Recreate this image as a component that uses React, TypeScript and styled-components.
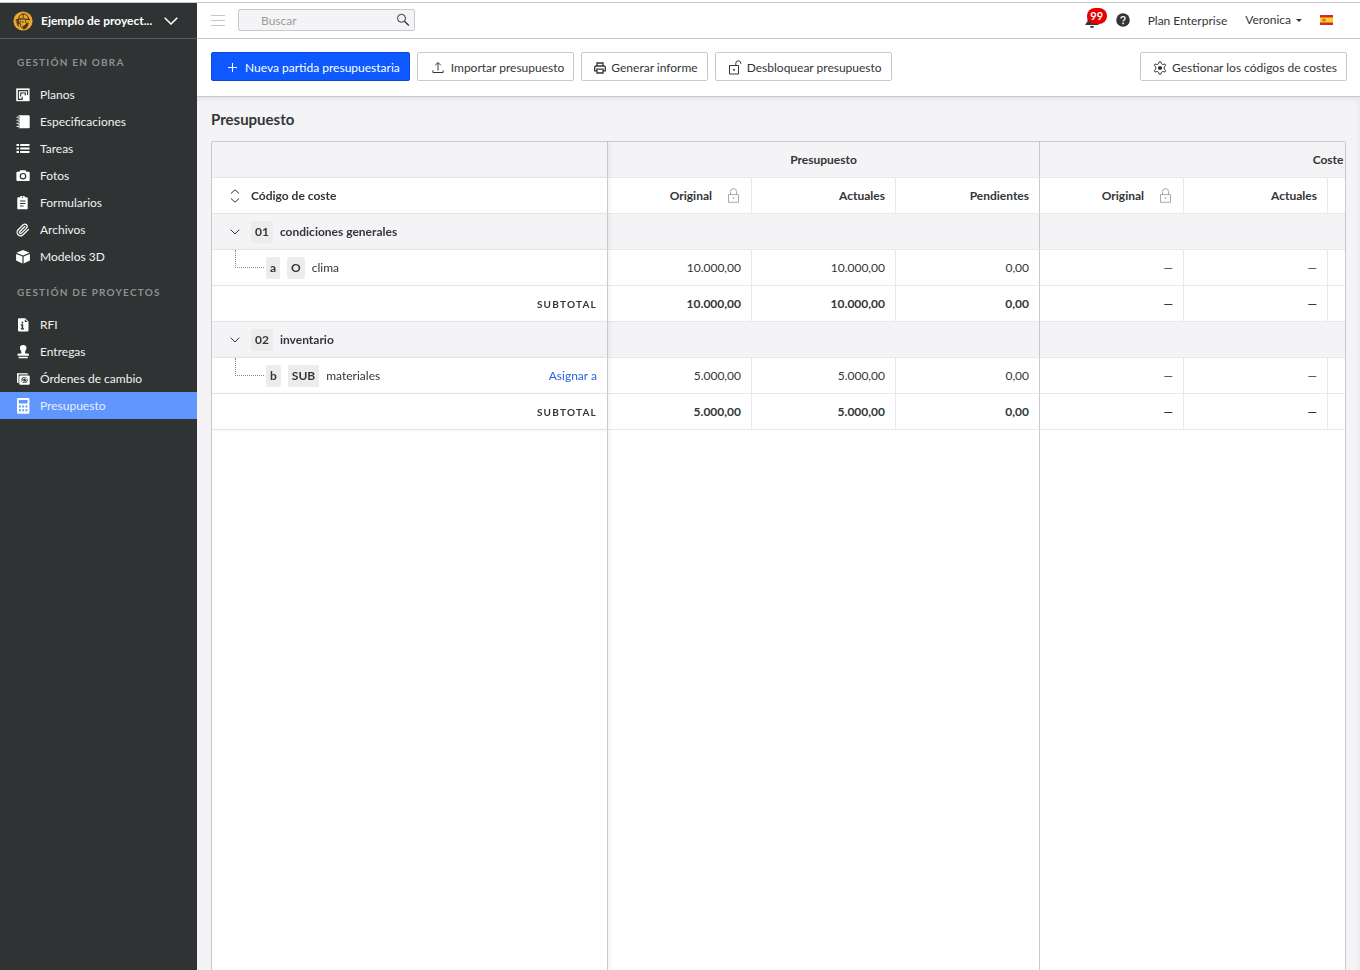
import React from "react";
import styled, { createGlobalStyle, css } from "styled-components";

const color = {
  text: "#333638",
  sidebar: "#2f3333",
  line: "#c9c9cb",
  hairline: "#e9e9ea",
  panel: "#f4f4f6",
  blue: "#0d59ff",
  active: "#6196ff",
};

const GlobalStyle = createGlobalStyle`
  *, *::before, *::after { box-sizing: border-box; }
  body {
    margin: 0;
    background: #fff;
    color: ${color.text};
    font-family: Lato, "Liberation Sans", sans-serif;
    font-size: 12px;
    line-height: 16px;
  }
  button, input { font: inherit; color: inherit; margin: 0; }
  button { cursor: pointer; }
  svg { display: block; flex: none; }
`;

const Page = styled.div`
  display: flex;
  flex-direction: column;
  height: 100vh;
  overflow: hidden;
`;

const TopStrip = styled.div`
  flex: none;
  height: 3px;
  border-bottom: 1px solid ${color.line};
`;

const Body = styled.div`
  flex: 1;
  min-height: 0;
  display: flex;
`;

/* Sidebar */

const Sidebar = styled.aside`
  flex: none;
  width: 197px;
  background: ${color.sidebar};
  color: #f2f2f2;
`;

const ProjectSwitcher = styled.button`
  display: flex;
  align-items: center;
  width: 100%;
  height: 36px;
  padding: 0 19px 0 13px;
  gap: 8px;
  border: 0;
  border-bottom: 1px solid #595c5c;
  background: none;
  color: #fff;
  font-weight: 700;
  text-align: left;
`;

const ProjectName = styled.span`
  flex: 1;
  white-space: nowrap;
`;

const Nav = styled.nav`
  padding-top: 1px;
`;

const NavHeading = styled.h2`
  margin: 0;
  padding: 14px 17px 11px;
  font-size: 10px;
  line-height: 16px;
  font-weight: 700;
  letter-spacing: 0.12em;
  text-transform: uppercase;
  color: #8e9191;
`;

const NavList = styled.ul`
  margin: 0;
  padding: 0;
  list-style: none;
`;

const NavLink = styled.a<{ $active?: boolean }>`
  display: flex;
  align-items: center;
  gap: 10px;
  height: 27px;
  padding: 0 16px;
  text-decoration: none;
  color: ${(p) => (p.$active ? "#e6eeff" : "#f2f2f2")};
  background: ${(p) => (p.$active ? color.active : "none")};
  svg { color: #fff; }
`;

/* Header */

const Main = styled.div`
  flex: 1;
  min-width: 0;
  display: flex;
  flex-direction: column;
`;

const Header = styled.header`
  flex: none;
  display: flex;
  align-items: center;
  height: 36px;
  padding: 0 27px 1px 14px;
  border-bottom: 1px solid ${color.line};
`;

const PlainButton = styled.button`
  display: flex;
  align-items: center;
  gap: 5px;
  padding: 0;
  border: 0;
  background: none;
`;

const SearchBox = styled.form`
  display: flex;
  align-items: center;
  width: 177px;
  height: 22px;
  margin-left: 13px;
  padding: 0 4px 0 22px;
  border: 1px solid ${color.line};
  border-radius: 2px;
  background: ${color.panel};
`;

const SearchInput = styled.input`
  flex: 1;
  min-width: 0;
  padding: 1px 0 0;
  border: 0;
  outline: 0;
  background: none;
  &::placeholder { color: #9b9b9b; opacity: 1; }
`;

const HeaderTools = styled.div`
  display: flex;
  align-items: center;
  gap: 18px;
  margin-left: auto;
`;

const IconGroup = styled.div`
  display: flex;
  align-items: center;
  gap: 17px;
`;

const Bell = styled(PlainButton)`
  position: relative;
`;

const Badge = styled.span`
  position: absolute;
  left: 2px;
  top: -4px;
  width: 20px;
  height: 16px;
  border-radius: 8px;
  background: #e60000;
  color: #fff;
  font-size: 11px;
  font-weight: 700;
  line-height: 15px;
  text-align: center;
`;

const PlanLink = styled.a`
  padding-top: 2px;
  color: inherit;
  text-decoration: none;
`;

/* Toolbar */

const Toolbar = styled.div`
  flex: none;
  display: flex;
  align-items: center;
  gap: 7px;
  height: 58px;
  padding: 0 13px 2px 14px;
  border-bottom: 1px solid ${color.line};
`;

const ToolButton = styled.button<{ $primary?: boolean; $lead?: number; $gap?: number }>`
  display: flex;
  align-items: center;
  gap: ${(p) => p.$gap ?? 5}px;
  height: 29px;
  padding: 2px 9px 0 ${(p) => p.$lead ?? 12}px;
  border: 1px solid ${color.line};
  border-radius: 2px;
  background: #fff;
  white-space: nowrap;
  ${(p) =>
    p.$primary &&
    css`
      border-color: #0b49d6;
      background: ${color.blue};
      color: #fff;
    `}
`;

const Spacer = styled.div`
  flex: 1;
`;

/* Budget */

const Content = styled.main`
  flex: 1;
  min-height: 0;
  display: flex;
  flex-direction: column;
  padding: 12px 14px 0;
  background: ${color.panel};
  box-shadow: inset -2px 4px 5px -1px rgba(0, 0, 0, 0.06);
`;

const Title = styled.h1`
  flex: none;
  margin: 0 0 12px;
  font-size: 15px;
  line-height: 20px;
  font-weight: 700;
`;

const TableFrame = styled.div`
  flex: 1;
  min-height: 0;
  overflow: hidden;
  border: 1px solid ${color.line};
  border-bottom: 0;
  border-radius: 2px 2px 0 0;
  background: #fff;
`;

const Table = styled.table`
  width: 1404px;
  height: 100%;
  table-layout: fixed;
  border-collapse: separate;
  border-spacing: 0;
  th, td { padding: 0; }
`;

const CodeCol = styled.col`
  width: 396px;
`;

const AmountCol = styled.col`
  width: 144px;
`;

type Edge = "none" | "light" | "strong";

const cell = css<{ $shade?: boolean; $edge?: Edge; $bold?: boolean }>`
  height: 36px;
  border-bottom: 1px solid ${color.hairline};
  border-right: ${(p) =>
    p.$edge === "none"
      ? "0"
      : `1px solid ${p.$edge === "strong" ? color.line : color.hairline}`};
  background: ${(p) => (p.$shade ? color.panel : "#fff")};
  font-weight: ${(p) => (p.$bold ? 700 : 400)};
  text-align: right;
  white-space: nowrap;
`;

const HeadCell = styled.th`
  ${cell}
`;

const DataCell = styled.td`
  ${cell}
  && { padding-right: 10px; }
`;

const pinned = css`
  position: sticky;
  left: 0;
  z-index: 1;
  box-shadow: 2px 0 5px rgba(0, 0, 0, 0.05);
`;

const PinnedHead = styled(HeadCell)`
  ${pinned}
`;

const PinnedCell = styled(DataCell)`
  ${pinned}
`;

const GroupTitle = styled(HeadCell)`
  text-align: center;
`;

const FillerCell = styled.td<{ $pinned?: boolean }>`
  border-right: 1px solid ${color.line};
  ${(p) => p.$pinned && pinned}
`;

const CellRow = styled.div<{ $indent: number; $gap?: number }>`
  display: flex;
  align-items: center;
  gap: ${(p) => p.$gap ?? 7}px;
  height: 35px;
  padding-left: ${(p) => p.$indent}px;
`;

const HeadContent = styled.div`
  display: flex;
  align-items: center;
  justify-content: flex-end;
  gap: 15px;
  padding-right: 10px;
`;

const ToggleButton = styled(PlainButton)`
  margin-right: 4px;
`;

const CodeTag = styled.span`
  height: 22px;
  padding: 0 4px;
  border-radius: 2px;
  background: #ececec;
  line-height: 22px;
  font-weight: 700;
`;

const Branch = styled.span`
  align-self: flex-start;
  width: 29px;
  height: 18px;
  margin-right: -5px;
  border-left: 1px dotted #8a8a8a;
  border-bottom: 1px dotted #8a8a8a;
`;

const AssignLink = styled.a`
  margin-left: auto;
  color: #2a63dc;
  text-decoration: none;
`;

const Subtotal = styled.span`
  font-size: 10px;
  letter-spacing: 0.12em;
`;

/* Icons */

type IconProps = { w?: number; h?: number; box: string; children: React.ReactNode };

const Solid = ({ w = 14, h = 14, box, children }: IconProps) => (
  <svg width={w} height={h} viewBox={box} fill="currentColor" aria-hidden="true">
    {children}
  </svg>
);

const Line = ({ w = 14, h = 14, box, children }: IconProps) => (
  <svg width={w} height={h} viewBox={box} fill="none" stroke="currentColor" aria-hidden="true">
    {children}
  </svg>
);

const Chevron = ({ w, h, stroke = 1 }: { w: number; h: number; stroke?: number }) => (
  <Line w={w} h={h} box={`0 0 ${w} ${h}`}>
    <path d={`M.7 .7 ${w / 2} ${h - 1} ${w - 0.7} .7`} strokeWidth={stroke} />
  </Line>
);

const LogoIcon = () => (
  <svg width="20" height="20" viewBox="0 0 20 20" aria-hidden="true">
    <circle cx="10" cy="10" r="9.6" fill="#eaa831" />
    <path d="M3.400 9.600 6 9.300v3l-.4 3.800C4.200 14.800 3.300 12.500 3.400 9.600z" fill="#5b3e10" />
    <path
      d="M9.500 14.800c1.500.3 2.500-.6 3-1.800l1.500-1.200 1.600-.6c.1 2.500-.9 4.900-2.700 6.200-.9.700-2 1-3 .8z"
      fill="#4e360f"
    />
    <g fill="none" stroke="#47300c" strokeLinecap="round">
      <path d="M5.600 7.800C6 4.600 8 2.900 10.600 2.900s4.700 1.900 5.100 5" strokeWidth="1" />
      <path d="M3.200 9.100c3.400-1.300 8.500-1.400 13.300-.4" strokeWidth="1.200" />
      <path d="M10.200 3.200v3.500M7.300 9.800l-.7 2.900h1v2.800l1.600 1.500" strokeWidth=".9" />
      <path d="M9 11h1.300M12.600 9.500v2" strokeWidth=".9" />
    </g>
  </svg>
);

const PlansIcon = () => (
  <Solid box="0 0 14 14">
    <path d="M.2.4h13.400v12.800H.2z" />
    <path
      d="M11.600 7V2.600H2.400v8.800h3.800V8.800M4.700 8.600V5h4.600v2.600"
      fill="none"
      stroke="#2f3333"
      strokeWidth="1.100"
    />
  </Solid>
);

const SpecsIcon = () => (
  <Solid box="0 0 14 14">
    <path d="M2.500.3H12.600a1.100 1.100 0 0 1 1.100 1.100v10.800a1.100 1.100 0 0 1-1.100 1.100H2.500z" />
    <path
      d="M.7 2.200h3M.7 5.200h3M.7 8.300h3M.7 11.400h3"
      stroke="#2f3333"
      strokeWidth="2"
    />
    <path d="M.5 2.200h3M.5 5.200h3M.5 8.300h3M.5 11.400h3" stroke="currentColor" strokeWidth="1" />
  </Solid>
);

const TasksIcon = () => (
  <Solid box="0 0 14 14">
    <path d="M.5 2h2.500v2H.5zM4.200 2H13.500v2H4.200zM.5 5.500h2.500v2H.5zM4.200 5.500h9.300v2H4.200zM.5 9h2.500v2H.5zM4.200 9h9.300v2H4.200z" />
  </Solid>
);

const CameraIcon = () => (
  <Solid box="0 0 14 14">
    <path
      fillRule="evenodd"
      d="M4.300 1.300h5.200l1 1.400h2.200a1 1 0 0 1 1 1v7.300a1 1 0 0 1-1 1H1.400a1 1 0 0 1-1-1V3.700a1 1 0 0 1 1-1h1.900zM7 3.900a3.300 3.300 0 1 0 0 6.600A3.300 3.300 0 0 0 7 3.900zm0 1.200a2.100 2.100 0 1 1 0 4.200 2.100 2.100 0 0 1 0-4.200z"
    />
  </Solid>
);

const FormsIcon = () => (
  <Solid box="0 0 14 14">
    <path
      fillRule="evenodd"
      d="M4.200 1.200A2.200 2 0 0 1 8.800 1.200h2a.9.9 0 0 1 .9.9v10.300a.9.9 0 0 1-.9.900H2.200a.9.9 0 0 1-.9-.9V2.100a.9.9 0 0 1 .9-.9zM6.500.6a.7.700 0 1 0 0 1.400.7.700 0 0 0 0-1.400zM4 4.500v1h5.400v-1zM4 7v1h5.400V7zM4 9.500v1h3.600v-1z"
    />
  </Solid>
);

const ClipIcon = () => (
  <Line box="0 0 24 24">
    <path
      d="m21.400 11-9.200 9.200a6 6 0 0 1-8.500-8.500l8.600-8.600a4 4 0 0 1 5.700 5.700l-8.600 8.600a2 2 0 0 1-2.800-2.900l8.500-8.400"
      strokeWidth="2.200"
      strokeLinecap="round"
    />
  </Line>
);

const CubeIcon = () => (
  <Solid box="0 0 14 14">
    <path d="M7 0l6.600 2.700L7 5.500.4 2.700zM.1 3.900l6.300 2.700v6.900L.1 10.600zM13.900 3.900L7.600 6.600v6.900l6.300-2.900z" />
  </Solid>
);

const RfiIcon = () => (
  <Solid box="0 0 14 14">
    <path
      fillRule="evenodd"
      d="M3 .3h6.200l3.300 3.200v9a1 1 0 0 1-1 1H3a1 1 0 0 1-1-1V1.300a1 1 0 0 1 1-1zM8.800 1.300v2.700h2.800zM5.600 3.800v1.600h1.600V3.800zM4.800 6.200v1.200h.8v2.800h-.8v1.200h3.200v-1.200h-.8V6.200z"
    />
  </Solid>
);

const StampIcon = () => (
  <Solid box="0 0 14 14">
    <path d="M7.200 0a3.300 3.300 0 0 1 3.300 3.300c0 1.700-1.500 2.300-1.500 4.200 0 .7.400 1 1.100 1h1.600a1.200 1.200 0 0 1 1.200 1.200v1H1.500v-1a1.200 1.200 0 0 1 1.200-1.200h1.600c.7 0 1.100-.3 1.100-1 0-1.900-1.500-2.500-1.500-4.200A3.300 3.300 0 0 1 7.200 0zM2.600 11.800h9.200v1.400H2.600z" />
  </Solid>
);

const ChangeIcon = () => (
  <Solid box="0 0 14 14">
    <path d="M1 1.200h10.800v1.400H2.600v8.400H1.800L1 10.200z" />
    <path
      fillRule="evenodd"
      d="M4.300 3.400h8.400a1 1 0 0 1 1 1v7.300a1 1 0 0 1-1 1H4.300a1 1 0 0 1-1-1V4.400a1 1 0 0 1 1-1zm4.200 1.500a3.100 3.100 0 1 0 0 6.200 3.100 3.100 0 0 0 0-6.200z"
    />
    <path
      d="M6.600 7.800A2 2 0 0 1 10.200 6.800M10.500 8.200A2 2 0 0 1 6.900 9.300M10.600 5.700v1.500H9.200M6.400 10.300V8.900H7.800"
      fill="none"
      stroke="currentColor"
      strokeWidth=".9"
    />
  </Solid>
);

const CalculatorIcon = () => (
  <Solid h={16} box="0 0 14 16">
    <path
      fillRule="evenodd"
      d="M2.200 0h10a1.200 1.200 0 0 1 1.200 1.200v13.400a1.200 1.200 0 0 1-1.200 1.200h-10A1.200 1.200 0 0 1 1 14.600V1.200A1.200 1.200 0 0 1 2.200 0zM2.800 2v3.600h8.800V2zM3 7.500v2h1.900v-2zM6.200 7.500v2h1.900v-2zM9.500 7.500v2h1.900v-2zM3 11.300v2h1.900v-2zM6.200 11.300v2h1.900v-2zM9.500 11.300v2h1.900v-2z"
    />
  </Solid>
);

const MenuIcon = () => (
  <Line box="0 0 14 11" h={11}>
    <path d="M0 .5h14M0 5.500h14M0 10.500h14" stroke="#c4c4c4" />
  </Line>
);

const SearchIcon = () => (
  <Line box="0 0 14 14">
    <circle cx="5.500" cy="5.300" r="4" />
    <path d="M8.500 8.300 12.800 12.500" strokeWidth="1.400" />
  </Line>
);

const BellIcon = () => (
  <Solid box="0 0 14 16" h={16}>
    <path d="M7 .5c3 0 4.500 2.300 4.500 5v4l2 2.500v1H.5v-1l2-2.500v-4c0-2.700 1.500-5 4.500-5zM5 14h4a2 2 0 0 1-4 0z" />
  </Solid>
);

const HelpIcon = () => (
  <Solid box="0 0 14 14">
    <circle cx="7" cy="7" r="6.800" />
    <path
      d="M4.900 5.600C4.900 4.300 5.800 3.600 7 3.600s2.100.7 2.100 1.800C9.100 6.900 7.100 6.900 7.100 8.500"
      fill="none"
      stroke="#fff"
      strokeWidth="1.300"
    />
    <circle cx="7.100" cy="10.400" r=".9" fill="#fff" />
  </Solid>
);

const CaretIcon = () => (
  <Solid w={6} h={3} box="0 0 6 3">
    <path d="M0 0h6L3 3z" />
  </Solid>
);

const FlagIcon = () => (
  <svg width="13" height="10" viewBox="0 0 13 10" aria-hidden="true">
    <path d="M0 0h13v10H0z" fill="#d32a32" />
    <path d="M0 2.500h13v5H0z" fill="#ffd21c" />
    <path d="M2.500 3.600h1v2.800h-1zM4 4h1.500v2.200H4z" fill="#b5562a" />
  </svg>
);

const PlusIcon = () => (
  <Line box="0 0 12 12" w={12} h={12}>
    <path d="M6.500 1v9M2 5.500h9" />
  </Line>
);

const UploadIcon = () => (
  <Line box="0 0 12 12" w={12} h={12}>
    <path d="M6 8.500V.8M3.200 3.300 6 .5l2.800 2.800M.9 8.300v2.200h10.200V8.300" />
  </Line>
);

const PrinterIcon = () => (
  <Line box="0 0 12 12" w={12} h={12}>
    <path
      d="M3 4V1h6v3M2.800 8.800H.7V5.200A1.200 1.200 0 0 1 1.900 4h8.200a1.200 1.200 0 0 1 1.200 1.200v3.600H9.200M3 7.200h6V11H3z"
      strokeWidth="1.300"
    />
  </Line>
);

const UnlockIcon = () => (
  <Line box="0 0 14 15" h={15}>
    <path d="M1.500 5.500h9v8.500h-9zM7.800 5.500V3.300a2.500 2.500 0 0 1 5 0V4" />
    <circle cx="6" cy="9.800" r=".6" fill="currentColor" />
  </Line>
);

const GearIcon = () => (
  <Line box="0 0 14 14">
    <path
      d="M6.200.8h1.600l.7 2 1.200.7 2.200-.5.8 1.400L11.200 6v1.900l1.500 1.700-.8 1.400-2.200-.5-1.200.7-.7 2H6.200l-.7-2-1.200-.7-2.200.5-.8-1.400 1.500-1.700V6L1.300 4.400 2.100 3l2.200.5 1.200-.7z"
    />
    <circle cx="7" cy="7" r="2.100" fill="currentColor" stroke="none" />
  </Line>
);

const LockIcon = () => (
  <Line box="0 0 14 15" h={15}>
    <g stroke="#aaa">
      <path d="M1.500 6.500h10v7.800h-10zM3.500 6.500V3.600a3 3 0 0 1 6 0v2.900" />
      <circle cx="6.500" cy="10" r=".5" />
    </g>
  </Line>
);

const SortIcon = () => (
  <Line box="0 0 10 14" w={10} h={14}>
    <path d="M1 4.500 5 .8l4 3.700M1 9.500l4 3.700 4-3.700" />
  </Line>
);

/* Data */

const sections = [
  {
    heading: "Gestión en obra",
    items: [
      { label: "Planos", icon: <PlansIcon /> },
      { label: "Especificaciones", icon: <SpecsIcon /> },
      { label: "Tareas", icon: <TasksIcon /> },
      { label: "Fotos", icon: <CameraIcon /> },
      { label: "Formularios", icon: <FormsIcon /> },
      { label: "Archivos", icon: <ClipIcon /> },
      { label: "Modelos 3D", icon: <CubeIcon /> },
    ],
  },
  {
    heading: "Gestión de proyectos",
    items: [
      { label: "RFI", icon: <RfiIcon /> },
      { label: "Entregas", icon: <StampIcon /> },
      { label: "Órdenes de cambio", icon: <ChangeIcon /> },
      { label: "Presupuesto", icon: <CalculatorIcon />, active: true },
    ],
  },
];

const groups = [
  {
    code: "01",
    name: "condiciones generales",
    line: { code: "a", type: "O", name: "clima", assign: false },
    amounts: ["10.000,00", "10.000,00", "0,00", "—", "—", "", ""],
  },
  {
    code: "02",
    name: "inventario",
    line: { code: "b", type: "SUB", name: "materiales", assign: true },
    amounts: ["5.000,00", "5.000,00", "0,00", "—", "—", "", ""],
  },
];

const Amounts = ({ values, bold }: { values: string[]; bold?: boolean }) => (
  <>
    {values.map((v, i) => (
      <DataCell key={i} $bold={bold} $edge={i === 2 ? "strong" : "light"}>
        {v}
      </DataCell>
    ))}
  </>
);

export default function App() {
  return (
    <Page>
      <GlobalStyle />
      <TopStrip />
      <Body>
        <Sidebar>
          <ProjectSwitcher>
            <LogoIcon />
            <ProjectName>Ejemplo de proyect...</ProjectName>
            <Chevron w={14} h={8} stroke={1.5} />
          </ProjectSwitcher>
          <Nav>
            {sections.map((s) => (
              <section key={s.heading}>
                <NavHeading>{s.heading}</NavHeading>
                <NavList>
                  {s.items.map((it) => (
                    <li key={it.label}>
                      <NavLink href="#" $active={"active" in it}>
                        {it.icon}
                        {it.label}
                      </NavLink>
                    </li>
                  ))}
                </NavList>
              </section>
            ))}
          </Nav>
        </Sidebar>
        <Main>
          <Header>
            <PlainButton aria-label="Menú">
              <MenuIcon />
            </PlainButton>
            <SearchBox role="search">
              <SearchInput type="text" placeholder="Buscar" aria-label="Buscar" />
              <SearchIcon />
            </SearchBox>
            <HeaderTools>
              <IconGroup>
                <Bell aria-label="Notificaciones">
                  <BellIcon />
                  <Badge>99</Badge>
                </Bell>
                <PlainButton aria-label="Ayuda">
                  <HelpIcon />
                </PlainButton>
              </IconGroup>
              <PlanLink href="#">Plan Enterprise</PlanLink>
              <PlainButton>
                Veronica
                <CaretIcon />
              </PlainButton>
              <PlainButton aria-label="Idioma">
                <FlagIcon />
              </PlainButton>
            </HeaderTools>
          </Header>
          <Toolbar>
            <ToolButton $primary $lead={14} $gap={7}>
              <PlusIcon />
              Nueva partida presupuestaria
            </ToolButton>
            <ToolButton $lead={14} $gap={7}>
              <UploadIcon />
              Importar presupuesto
            </ToolButton>
            <ToolButton>
              <PrinterIcon />
              Generar informe
            </ToolButton>
            <ToolButton>
              <UnlockIcon />
              Desbloquear presupuesto
            </ToolButton>
            <Spacer />
            <ToolButton>
              <GearIcon />
              Gestionar los códigos de costes
            </ToolButton>
          </Toolbar>
          <Content>
            <Title>Presupuesto</Title>
            <TableFrame>
              <Table>
                <colgroup>
                  <CodeCol />
                  {groups[0].amounts.map((_, i) => (
                    <AmountCol key={i} />
                  ))}
                </colgroup>
                <thead>
                  <tr>
                    <PinnedHead $shade $edge="strong" />
                    <GroupTitle $shade $bold $edge="strong" colSpan={3}>
                      Presupuesto
                    </GroupTitle>
                    <GroupTitle $shade $bold $edge="none" colSpan={4}>
                      Coste
                    </GroupTitle>
                  </tr>
                  <tr>
                    <PinnedHead $bold $edge="strong">
                      <CellRow $indent={18} $gap={11}>
                        <SortIcon />
                        Código de coste
                      </CellRow>
                    </PinnedHead>
                    {["Original", "Actuales", "Pendientes", "Original", "Actuales", "", ""].map(
                      (h, i) => (
                        <HeadCell key={i} $bold $edge={i === 2 ? "strong" : "light"}>
                          <HeadContent>
                            {h}
                            {h === "Original" && <LockIcon />}
                          </HeadContent>
                        </HeadCell>
                      )
                    )}
                  </tr>
                </thead>
                <tbody>
                  {groups.map((g) => (
                    <React.Fragment key={g.code}>
                      <tr>
                        <PinnedHead $shade $bold $edge="strong" scope="row">
                          <CellRow $indent={18}>
                            <ToggleButton aria-label={g.name}>
                              <Chevron w={10} h={6} />
                            </ToggleButton>
                            <CodeTag>{g.code}</CodeTag>
                            {g.name}
                          </CellRow>
                        </PinnedHead>
                        <DataCell $shade $edge="strong" colSpan={3} />
                        <DataCell $shade $edge="none" colSpan={4} />
                      </tr>
                      <tr>
                        <PinnedCell $edge="strong">
                          <CellRow $indent={23}>
                            <Branch />
                            <CodeTag>{g.line.code}</CodeTag>
                            <CodeTag>{g.line.type}</CodeTag>
                            {g.line.name}
                            {g.line.assign && <AssignLink href="#">Asignar a</AssignLink>}
                          </CellRow>
                        </PinnedCell>
                        <Amounts values={g.amounts} />
                      </tr>
                      <tr>
                        <PinnedCell $bold $edge="strong">
                          <Subtotal>SUBTOTAL</Subtotal>
                        </PinnedCell>
                        <Amounts values={g.amounts} bold />
                      </tr>
                    </React.Fragment>
                  ))}
                  <tr>
                    <FillerCell $pinned />
                    <FillerCell colSpan={3} />
                    <FillerCell colSpan={4} />
                  </tr>
                </tbody>
              </Table>
            </TableFrame>
          </Content>
        </Main>
      </Body>
    </Page>
  );
}
